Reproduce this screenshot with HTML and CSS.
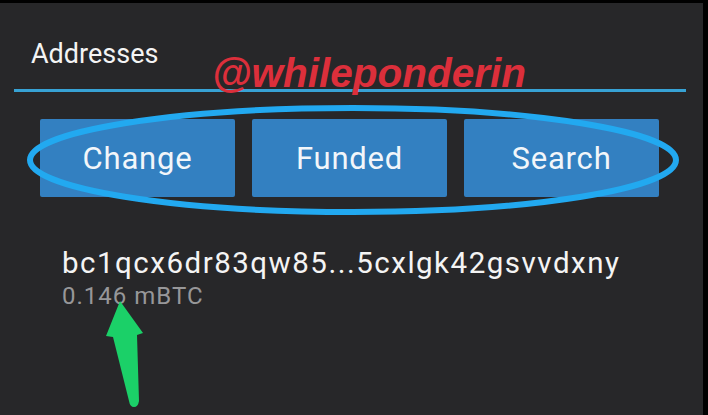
FILE: index.html
```html
<!DOCTYPE html>
<html lang="en">
<head>
    <meta charset="UTF-8">
    <meta name="viewport" content="width=device-width, initial-scale=1.0">
    <title>Addresses</title>
    <link rel="stylesheet" href="styles.css">
</head>
<body>
    <div class="screen">
        <div class="title">Addresses</div>
        <div class="divider"></div>

        <div class="actions">
            <button class="action">Change</button>
            <button class="action">Funded</button>
            <button class="action">Search</button>
        </div>

        <div class="address">
            <div class="address-id">bc1qcx6dr83qw85...5cxlgk42gsvvdxny</div>
            <div class="address-amount">0.146 mBTC</div>
        </div>

        <!-- annotations drawn over the screenshot -->
        <div class="watermark">@whileponderin</div>
        <svg class="marks" width="703" height="412" viewBox="0 0 703 412">
            <ellipse cx="353" cy="157" rx="323" ry="52" fill="none" stroke="#22a9f0" stroke-width="6"/>
            <path d="M120 298 L143 330 L137 332 L139 398 Q138 404 134 404 Q130 404 129 398 L113 334 L106 333 Z" fill="#1bd068"/>
        </svg>
        <div class="edge-tick"></div>
    </div>
</body>
</html>
```

FILE: styles.css
```css
body{
    margin: 0;
    background-color: #000;
    font-family: Roboto, "Noto Sans", sans-serif;
}

.screen{
    position: relative;
    width: 703px;
    height: 412px;
    margin-top: 3px;
    background-color: #272729;
    overflow: hidden;
}

.title{
    padding: 35px 0 0 31px;
    font-size: 27px;
    line-height: 32px;
    color: #f4f4f4;
}

.divider{
    height: 3px;
    margin: 19px 17px 0 14px;
    background-color: #37a2d4;
}

.actions{
    display: flex;
    gap: 17px;
    margin-top: 27px;
    padding: 0 44px 0 40px;
}

.action{
    flex: 1;
    height: 78px;
    border: none;
    border-radius: 2px;
    background-color: #3380c1;
    color: #f2f6fa;
    font-family: Roboto, "Noto Sans", sans-serif;
    font-size: 31px;
    letter-spacing: 0.8px;
    padding: 0;
}

.address{
    padding: 50px 0 0 62px;
}

.address-id{
    font-size: 29.5px;
    line-height: 32px;
    color: #f4f4f4;
    letter-spacing: 1.5px;
}

.address-amount{
    margin-top: 3px;
    font-size: 24px;
    line-height: 28px;
    color: #979799;
    letter-spacing: 1px;
}

.watermark{
    position: absolute;
    left: 212px;
    top: 47px;
    font-family: "Liberation Sans", Arial, sans-serif;
    font-weight: bold;
    font-style: italic;
    font-size: 40.5px;
    line-height: 46px;
    color: #dc2f3b;
}

.marks{
    position: absolute;
    left: 0;
    top: 0;
}

.edge-tick{
    position: absolute;
    right: -5px;
    top: 179px;
    width: 5px;
    height: 5px;
    background-color: #1d4f7a;
}
```
